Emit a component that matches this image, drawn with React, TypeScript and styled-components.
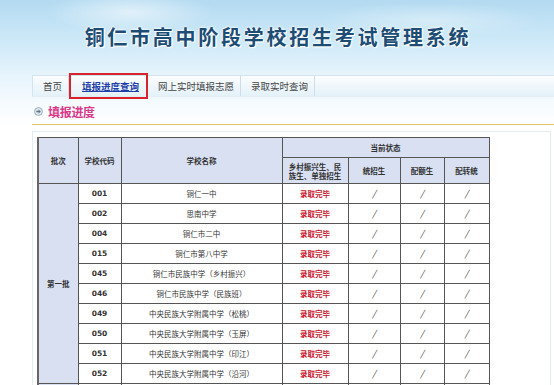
import React from "react";
import styled, { createGlobalStyle } from "styled-components";

const Global = createGlobalStyle`
  html, body { margin: 0; padding: 0; }
  body {
    width: 554px;
    height: 385px;
    overflow: hidden;
    font-family: "Noto Sans CJK SC", "Liberation Sans", sans-serif;
    background: linear-gradient(180deg, #b3daf1 0px, #cde9f8 40px, #e6f4fc 75px, #f6fbfe 105px, #ffffff 128px);
  }
`;

const Page = styled.div`
  width: 554px;
  display: flex;
  flex-direction: column;
`;

const Banner = styled.header`
  height: 75px;
  display: flex;
  justify-content: center;
  align-items: flex-start;
  padding-top: 24px;
  padding-left: 2px;
  box-sizing: border-box;
  background:
    radial-gradient(ellipse 120px 30px at 130px 12px, rgba(255,255,255,0.55), rgba(255,255,255,0) 70%),
    radial-gradient(ellipse 160px 25px at 430px 20px, rgba(255,255,255,0.35), rgba(255,255,255,0) 70%);
`;

const Title = styled.h1`
  margin: 0;
  font-size: 20px;
  line-height: 26px;
  font-weight: 700;
  letter-spacing: 2.75px;
  color: #1d4d74;
  text-shadow: 0 0 2px #fff, 0 0 3px #fff, 1px 1px 0 #fff;
`;

const Nav = styled.nav`
  margin-left: 32px;
  height: 22px;
  display: flex;
  align-items: center;
  border-top: 1px solid #d3e4ee;
  border-bottom: 1px solid #e3eef5;
  background: linear-gradient(180deg, #fbfdfe 0%, #e4f1f9 100%);
  border-left: 1px solid #d3e4ee;
  box-sizing: border-box;
`;

const NavItem = styled.a<{ $active?: boolean }>`
  height: ${(p) => (p.$active ? "26px" : "20px")};
  display: flex;
  align-items: center;
  box-sizing: border-box;
  padding: ${(p) => (p.$active ? "0 7px 0 11px" : "0 6px 0 10px")};
  font-size: 9.5px;
  color: ${(p) => (p.$active ? "#1e3fa8" : "#444")};
  font-weight: ${(p) => (p.$active ? 700 : 400)};
  text-decoration: ${(p) => (p.$active ? "underline" : "none")};
  border: ${(p) => (p.$active ? "2px solid #d8232a" : "none")};
  border-right: ${(p) => (p.$active ? "2px solid #d8232a" : "1px solid #cfdde6")};
  white-space: nowrap;
`;

const SectionHead = styled.div`
  margin-left: 32px;
  height: 28px;
  display: flex;
  align-items: center;
  gap: 5px;
  padding-left: 2px;
  padding-top: 1px;
  box-sizing: border-box;
  border-bottom: 1px solid #e6c46a;
`;

const SectionTitle = styled.span`
  font-size: 12px;
  font-weight: 700;
  color: #d8398a;
  letter-spacing: -0.3px;
`;

const Frame = styled.div`
  margin: 6px 3px 0 32px;
  padding: 5px 0 0 4px;
  border: 1px solid #e3ebf2;
  border-bottom: none;
  background: #fff;
`;

const Table = styled.table`
  border-collapse: collapse;
  width: 451px;
  table-layout: fixed;
  border-left: 2px solid #666;
`;

const Th = styled.th<{ $h?: number }>`
  border: 1px solid #555;
  background: #d8e0f2;
  font-size: 7.5px;
  font-weight: 700;
  color: #333;
  height: ${(p) => p.$h ?? 20}px;
  padding: 0 4px;
  line-height: 9px;
  text-align: center;
  box-sizing: border-box;
`;

const Td = styled.td<{ $kind?: "code" | "name" | "status" | "slash" | "batch" }>`
  border: 1px solid #555;
  height: 20px;
  padding: 0;
  text-align: center;
  box-sizing: border-box;
  font-size: ${(p) => (p.$kind === "slash" ? "9px" : "7.5px")};
  font-weight: ${(p) => (p.$kind === "name" || p.$kind === "slash" ? 400 : 700)};
  font-style: ${(p) => (p.$kind === "slash" ? "italic" : "normal")};
  font-family: ${(p) => (p.$kind === "code" ? '"DejaVu Sans", sans-serif' : "inherit")};
  color: ${(p) => (p.$kind === "status" ? "#c8152b" : "#333")};
  background: ${(p) => (p.$kind === "batch" ? "#d8e0f2" : "#fff")};
  white-space: nowrap;
`;

const Icon = () => (
  <svg width="9" height="9" viewBox="0 0 10 10">
    <circle cx="5" cy="5" r="4.4" fill="#dbe6ee" stroke="#8fa5b5" strokeWidth="0.9" />
    <path d="M2.6 4.3h2.6V2.8L7.6 5 5.2 7.2V5.7H2.6z" fill="#5d7485" />
  </svg>
);

const rows: [string, string][] = [
  ["001", "铜仁一中"],
  ["002", "思南中学"],
  ["004", "铜仁市二中"],
  ["015", "铜仁市第八中学"],
  ["045", "铜仁市民族中学（乡村振兴）"],
  ["046", "铜仁市民族中学（民族班）"],
  ["049", "中央民族大学附属中学（松桃）"],
  ["050", "中央民族大学附属中学（玉屏）"],
  ["051", "中央民族大学附属中学（印江）"],
  ["052", "中央民族大学附属中学（沿河）"],
];

export default function App() {
  return (
    <>
      <Global />
      <Page>
        <Banner>
          <Title>铜仁市高中阶段学校招生考试管理系统</Title>
        </Banner>
        <Nav>
          <NavItem>首页</NavItem>
          <NavItem $active>填报进度查询</NavItem>
          <NavItem>网上实时填报志愿</NavItem>
          <NavItem>录取实时查询</NavItem>
        </Nav>
        <SectionHead>
          <Icon />
          <SectionTitle>填报进度</SectionTitle>
        </SectionHead>
        <Frame>
          <Table>
            <colgroup>
              <col style={{ width: 40 }} />
              <col style={{ width: 43 }} />
              <col style={{ width: 161 }} />
              <col style={{ width: 66 }} />
              <col style={{ width: 52 }} />
              <col style={{ width: 44 }} />
              <col style={{ width: 45 }} />
            </colgroup>
            <thead>
              <tr>
                <Th rowSpan={2}>批次</Th>
                <Th rowSpan={2}>学校代码</Th>
                <Th rowSpan={2}>学校名称</Th>
                <Th colSpan={4} $h={20}>当前状态</Th>
              </tr>
              <tr>
                <Th $h={26}>乡村振兴生、民族生、单独招生</Th>
                <Th $h={26}>统招生</Th>
                <Th $h={26}>配额生</Th>
                <Th $h={26}>配转统</Th>
              </tr>
            </thead>
            <tbody>
              {rows.map(([code, name], i) => (
                <tr key={code}>
                  {i === 0 && (
                    <Td $kind="batch" rowSpan={rows.length}>
                      第一批
                    </Td>
                  )}
                  <Td $kind="code">{code}</Td>
                  <Td $kind="name">{name}</Td>
                  <Td $kind="status">录取完毕</Td>
                  <Td $kind="slash">/</Td>
                  <Td $kind="slash">/</Td>
                  <Td $kind="slash">/</Td>
                </tr>
              ))}
              <tr>
                <Td $kind="batch" />
                <Td $kind="code" />
                <Td $kind="name" />
                <Td $kind="status" />
                <Td $kind="slash" />
                <Td $kind="slash" />
                <Td $kind="slash" />
              </tr>
            </tbody>
          </Table>
        </Frame>
      </Page>
    </>
  );
}
